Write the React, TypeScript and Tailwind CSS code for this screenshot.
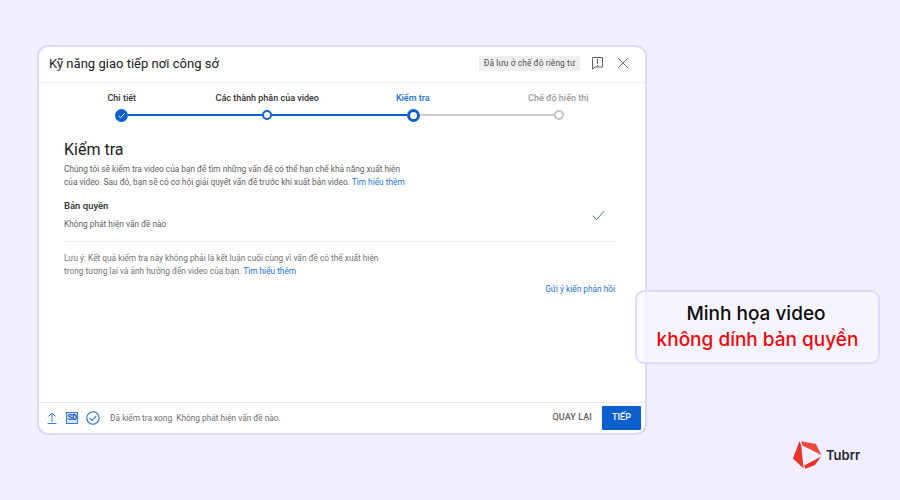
import React from "react";

const Link = ({ children }: { children: React.ReactNode }) => (
  <span className="text-[#1a73d6]">{children}</span>
);

const steps = [
  { label: "Chi tiết", cls: "text-[#303030]" },
  { label: "Các thành phần của video", cls: "text-[#303030]" },
  { label: "Kiểm tra", cls: "text-[#1a6fd6]" },
  { label: "Chế độ hiển thị", cls: "text-[#9a9a9a]" },
];

export default function App() {
  return (
    <div className="relative h-[500px] w-[900px] overflow-hidden bg-[#f1eeff] pl-[37px] pt-[45px] [font-family:Roboto,sans-serif]">
      <div className="flex h-[390px] w-[610px] flex-col rounded-[11px] border-2 border-[#dfd6fb] bg-white">
        <div className="flex h-[36px] shrink-0 items-center border-b border-[#eeeeee] pb-[3px] pl-[10px] pr-[16px]">
          <h1 className="flex-1 text-[13px] leading-none tracking-[0.02px] text-[#202020]">Kỹ năng giao tiếp nơi công sở</h1>
          <span className="flex h-[15px] w-[101px] items-center justify-center rounded-[1px] bg-[#efefef] text-[8.4px] tracking-[0.1px] text-[#505050]">
            Đã lưu ở chế độ riêng tư
          </span>
          <svg className="ml-[11px] h-[14px] w-[13px]" viewBox="0 0 13 14" fill="none" stroke="#606060" strokeWidth="1">
            <path d="M1.5 1.5h10v9.5h-7.5l-2.5 2.2z" />
            <path d="M6.5 2.8v5M6.5 8.8v1.3" />
          </svg>
          <svg className="ml-[13px] h-[12px] w-[12px]" viewBox="0 0 12 12" fill="none" stroke="#707070" strokeWidth="0.9">
            <path d="M1 1l10 10M11 1L1 11" />
          </svg>
        </div>

        <div className="pl-[10px] pr-[14px] pt-[9px]">
          <div className="grid grid-cols-4">
            {steps.map((s) => (
              <div key={s.label} className={`text-center text-[9px] font-medium leading-[13px] ${s.cls}`}>
                {s.label}
              </div>
            ))}
          </div>
          <div className="mt-[3px] flex h-[14px] items-center pl-[66px] pr-[67px]">
            <div className="flex h-[13px] w-[13px] shrink-0 items-center justify-center rounded-full bg-[#0b5fce]">
              <svg className="h-[9px] w-[9px]" viewBox="0 0 9 9" fill="none" stroke="#fff" strokeWidth="1">
                <path d="M1.5 4.8l2 2 4-4.4" />
              </svg>
            </div>
            <div className="h-[2px] flex-1 bg-[#0b5fce]" />
            <div className="h-[10px] w-[10px] shrink-0 rounded-full border-2 border-[#0b5fce] bg-white" />
            <div className="h-[2px] flex-1 bg-[#0b5fce]" />
            <div className="h-[13px] w-[13px] shrink-0 rounded-full border-[3px] border-[#0b5fce] bg-white" />
            <div className="h-[2px] flex-1 bg-[#cccccc]" />
            <div className="h-[10px] w-[10px] shrink-0 rounded-full border-2 border-[#c4c4c4] bg-white" />
          </div>
        </div>

        <div className="flex-1 pl-[25px] pr-[29px] pt-[18px]">
          <h2 className="text-[16px] font-normal leading-[19px] text-[#202020]">Kiểm tra</h2>
          <p className="mt-[4px] text-[8.3px] leading-[13px] text-[#606060]">
            Chúng tôi sẽ kiểm tra video của bạn để tìm những vấn đề có thể hạn chế khả năng xuất hiện
            <br />
            của video. Sau đó, bạn sẽ có cơ hội giải quyết vấn đề trước khi xuất bản video. <Link>Tìm hiểu thêm</Link>
          </p>
          <div className="mt-[10px] flex items-center border-b border-[#eeeeee] pb-[10px]">
            <div className="flex-1">
              <div className="text-[9.5px] font-medium leading-[13px] text-[#303030]">Bản quyền</div>
              <div className="mt-[6px] text-[8.3px] leading-[13px] text-[#606060]">Không phát hiện vấn đề nào</div>
            </div>
            <svg className="mr-[11px] h-[11px] w-[13px]" viewBox="0 0 13 11" fill="none" stroke="#2e8b3d" strokeWidth="1">
              <path d="M0.8 5.8l3.7 3.8 7.7-8.6" />
            </svg>
          </div>
          <p className="mt-[10px] text-[8.3px] leading-[13px] text-[#737373]">
            Lưu ý: Kết quả kiểm tra này không phải là kết luận cuối cùng vì vấn đề có thể xuất hiện
            <br />
            trong tương lai và ảnh hưởng đến video của bạn. <Link>Tìm hiểu thêm</Link>
          </p>
          <div className="mt-[5px] pr-[1px] text-right text-[8.3px] leading-[13px] text-[#1a73d6]">Gửi ý kiến phản hồi</div>
        </div>

        <div className="flex h-[31px] shrink-0 items-center border-t border-[#e8e8e8] pl-[7px] pr-[4px]">
          <svg className="h-[14px] w-[12px]" viewBox="0 0 12 14" fill="none" stroke="#2f7fdc" strokeWidth="1">
            <path d="M6 11V2.2M2.6 5.4L6 2l3.4 3.4M1.5 12.5h9" />
          </svg>
          <span className="ml-[8px] flex h-[12px] w-[12px] items-center justify-center border border-[#2f7fdc] bg-[#d5e6fb] text-[8.5px] font-bold leading-none tracking-[-0.5px] text-[#134fa8] [font-family:'Liberation_Mono',monospace]">
            SD
          </span>
          <svg className="ml-[8px] h-[14px] w-[14px]" viewBox="0 0 14 14" fill="none" stroke="#1f6ad6" strokeWidth="1.1">
            <circle cx="7" cy="7" r="6.2" />
            <path d="M3.8 7.2l2.3 2.3 4.2-4.6" />
          </svg>
          <span className="ml-[10px] flex-1 text-[8.3px] text-[#707070]">Đã kiểm tra xong. Không phát hiện vấn đề nào.</span>
          <span className="text-[9px] font-medium tracking-[0.1px] text-[#606060]">QUAY LẠI</span>
          <span className="ml-[10px] flex h-[24px] w-[39px] items-center justify-center rounded-[1px] bg-[#0b5fce] text-[9px] font-medium text-white">
            TIẾP
          </span>
        </div>
      </div>

      <div className="absolute left-[635px] top-[290px] flex h-[74px] w-[245px] flex-col items-center justify-center rounded-[9px] border-2 border-[#e0daff] bg-[#f8f6ff]/80 [font-family:Inter,sans-serif]">
        <div className="pr-[3px] text-[19px] font-medium leading-[26px] text-[#0c0c0c]">Minh họa video</div>
        <div className="text-[19px] font-medium leading-[26px] text-[#f50606]">không dính bản quyền</div>
      </div>

      <div className="absolute left-[793px] top-[441px] flex items-center">
        <svg className="h-[28px] w-[29px]" viewBox="0 0 29 28">
          <path d="M6.5 0L0 17.5 10.5 27.5 8.3 5z" fill="#e8352b" />
          <path d="M8 0.2L23 3 28.3 14 9.6 4.6z" fill="#ef4a3a" />
          <path d="M28 15.8L22 24 12.5 27.8 11 24.6z" fill="#e8352b" />
        </svg>
        <span className="ml-[4px] text-[13px] font-semibold leading-none text-[#26262c] [font-family:Inter,sans-serif]">Tubrr</span>
      </div>
    </div>
  );
}
